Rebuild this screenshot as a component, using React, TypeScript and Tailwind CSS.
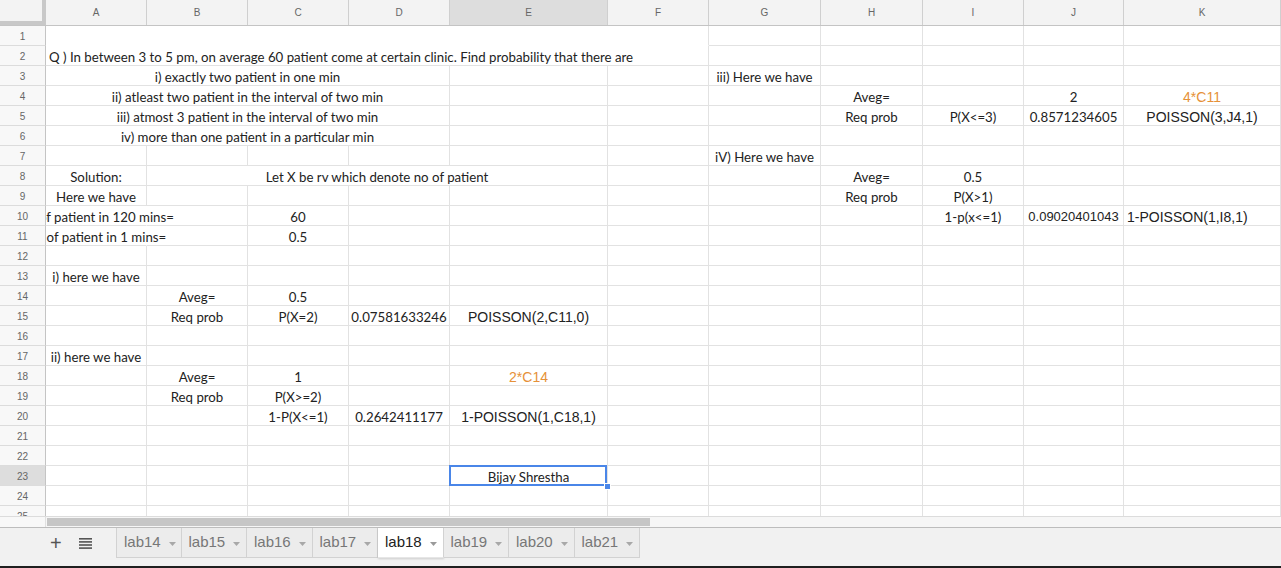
import React from "react";

type Cell = {
  c: number;
  span?: number;
  t?: string;
  align?: "l" | "c";
  f?: "a14" | "a13";
  orange?: boolean;
  noR?: boolean;
  noB?: boolean;
  sel?: boolean;
};

const COLS = ["A", "B", "C", "D", "E", "F", "G", "H", "I", "J", "K"];
const HEAD_W = [
  "w-[101px]",
  "w-[101px]",
  "w-[101px]",
  "w-[101px]",
  "w-[158px]",
  "w-[101px]",
  "w-[112px]",
  "w-[102px]",
  "w-[101px]",
  "w-[100px]",
  "flex-1",
];

const SPAN: Record<number, string> = {
  1: "",
  2: "col-span-2",
  4: "col-span-4",
  6: "col-span-6",
};

const ROWS: Cell[][] = [
  [{ c: 0, span: 6, noB: true }],
  [
    {
      c: 0,
      span: 6,
      align: "l",
      t: "Q ) In between 3 to 5 pm, on average 60 patient come at certain clinic. Find probability that there are",
    },
  ],
  [
    { c: 0, span: 4, t: "i) exactly two patient in one min" },
    { c: 6, t: "iii) Here we have" },
  ],
  [
    { c: 0, span: 4, t: "ii) atleast two patient in the interval of two min" },
    { c: 7, t: "Aveg=" },
    { c: 9, t: "2" },
    { c: 10, t: "4*C11", f: "a14", orange: true },
  ],
  [
    { c: 0, span: 4, t: "iii) atmost 3 patient in the interval of two min" },
    { c: 7, t: "Req prob" },
    { c: 8, t: "P(X<=3)" },
    { c: 9, t: "0.8571234605" },
    { c: 10, t: "POISSON(3,J4,1)", f: "a14" },
  ],
  [{ c: 0, span: 4, t: "iv) more than one patient in a particular min" }],
  [{ c: 6, t: "iV) Here we have" }],
  [
    { c: 0, t: "Solution:" },
    { c: 1, span: 4, t: "Let X be rv which denote no of patient" },
    { c: 7, t: "Aveg=" },
    { c: 8, t: "0.5" },
  ],
  [
    { c: 0, t: "Here we have" },
    { c: 7, t: "Req prob" },
    { c: 8, t: "P(X>1)" },
  ],
  [
    { c: 0, t: "No of patient in 120 mins=", noR: true },
    { c: 2, t: "60" },
    { c: 8, t: "1-p(x<=1)" },
    { c: 9, t: "0.09020401043", f: "a13" },
    { c: 10, t: "1-POISSON(1,I8,1)", f: "a14", align: "l" },
  ],
  [
    { c: 0, t: "No of patient in 1 mins=", noR: true },
    { c: 2, t: "0.5" },
  ],
  [],
  [{ c: 0, t: "i) here we have" }],
  [
    { c: 1, t: "Aveg=" },
    { c: 2, t: "0.5" },
  ],
  [
    { c: 1, t: "Req prob" },
    { c: 2, t: "P(X=2)" },
    { c: 3, t: "0.07581633246" },
    { c: 4, t: "POISSON(2,C11,0)", f: "a14" },
  ],
  [],
  [{ c: 0, t: "ii) here we have" }],
  [
    { c: 1, t: "Aveg=" },
    { c: 2, t: "1" },
    { c: 4, t: "2*C14", f: "a14", orange: true },
  ],
  [
    { c: 1, t: "Req prob" },
    { c: 2, t: "P(X>=2)" },
  ],
  [
    { c: 2, t: "1-P(X<=1)" },
    { c: 3, t: "0.2642411177" },
    { c: 4, t: "1-POISSON(1,C18,1)", f: "a14" },
  ],
  [],
  [],
  [{ c: 4, t: "Bijay Shrestha", sel: true }],
  [],
  [],
];

function fillRow(cells: Cell[]): Cell[] {
  const out: Cell[] = [];
  let i = 0;
  while (i < 11) {
    const found = cells.find((x) => x.c === i);
    if (found) {
      out.push(found);
      i += found.span ?? 1;
    } else {
      out.push({ c: i });
      i += 1;
    }
  }
  return out;
}

function CellView({ cell }: { cell: Cell }) {
  const cls = [
    "relative flex items-end h-full min-w-0 whitespace-nowrap px-[3px] border-b border-r border-[#e2e2e2] leading-[16px]",
    SPAN[cell.span ?? 1],
    cell.align === "l" ? "justify-start" : "justify-center",
    cell.noR ? "border-r-transparent" : "",
    cell.noB ? "border-b-transparent" : "",
    cell.f === "a14"
      ? "font-['Liberation_Sans',Arial,sans-serif] text-[14px]"
      : cell.f === "a13"
      ? "font-['Liberation_Sans',Arial,sans-serif] text-[13px]"
      : "",
    cell.orange ? "text-[#e69138]" : "text-[#222222]",
  ].join(" ");
  return (
    <div className={cls}>
      {cell.t ? <span>{cell.t}</span> : null}
      {cell.sel ? (
        <>
          <div className="absolute -left-px -top-px right-0 -bottom-px border-2 border-[#4a86e8] z-10 pointer-events-none" />
          <div className="absolute -right-[4px] -bottom-[5px] w-[7px] h-[7px] bg-[#4a86e8] border border-white z-20" />
        </>
      ) : null}
    </div>
  );
}

function Row({ n, cells }: { n: number; cells: Cell[] }) {
  const selected = n === 23;
  return (
    <div className="flex h-[20px] shrink-0">
      <div
        className={`relative z-[1] w-[46px] shrink-0 flex items-center justify-center pt-[2px] border-r border-r-[#c4c4c4] border-b border-b-[#dcdcdc] font-['Liberation_Sans',Arial,sans-serif] text-[10px] text-[#666] ${
          selected ? "bg-[#dddddd]" : "bg-[#f8f8f8]"
        }`}
      >
        {n}
      </div>
      <div
        className={`grid flex-1 grid-cols-[101px_101px_101px_101px_158px_101px_112px_102px_101px_100px_157px] ${
          selected ? "" : "overflow-hidden"
        }`}
      >
        {fillRow(cells).map((cell) => (
          <CellView key={cell.c} cell={cell} />
        ))}
      </div>
    </div>
  );
}

function Caret({ dark }: { dark?: boolean }) {
  return (
    <svg width="7" height="4" viewBox="0 0 7 4" className="ml-[8px] mt-[2px]">
      <polygon points="0,0 7,0 3.5,4" fill={dark ? "#9a9a9a" : "#a8a8a8"} />
    </svg>
  );
}

const TABS = ["lab14", "lab15", "lab16", "lab17", "lab18", "lab19", "lab20", "lab21"];

export default function App() {
  return (
    <div className="w-[1281px] h-[568px] overflow-hidden bg-white flex flex-col font-['Lato','Open_Sans',sans-serif] text-[13.25px]">
      {/* Column headers */}
      <div className="flex h-[26px] shrink-0 bg-[#f3f3f3] border-b border-[#c4c4c4]">
        <div className="w-[46px] shrink-0 border-r-[4px] border-b-[4px] border-[#c8c8c8] bg-[#f3f3f3]" />
        {COLS.map((c, i) => (
          <div
            key={c}
            className={`${HEAD_W[i]} shrink-0 flex items-center justify-center border-r border-[#cfcfcf] font-['Liberation_Sans',Arial,sans-serif] text-[10px] text-[#666] ${
              c === "E" ? "bg-[#dddddd]" : ""
            }`}
          >
            {c}
          </div>
        ))}
      </div>

      {/* Body */}
      <div className="h-[490px] shrink-0 overflow-hidden flex flex-col">
        {ROWS.map((cells, i) => (
          <Row key={i} n={i + 1} cells={cells} />
        ))}
        <Row n={25} cells={[]} />
      </div>

      {/* Horizontal scrollbar */}
      <div className="h-[12px] shrink-0 flex border-t border-[#dcdcdc] border-b border-b-[#bdbdbd] bg-[#f6f6f6]">
        <div className="w-[46px] shrink-0 bg-[#f8f8f8] border-r border-[#e0e0e0]" />
        <div className="flex-1 flex items-center pl-[1px]">
          <div className="w-[603px] h-[8px] bg-[#c6c6c6]" />
        </div>
      </div>

      {/* Sheet tabs */}
      <div className="h-[38px] shrink-0 flex items-start bg-[#f1f1f1] font-['Liberation_Sans',Arial,sans-serif]">
        <div className="w-[116px] shrink-0 h-[30px] flex items-center">
          <span className="ml-[50px] text-[20px] leading-none text-[#555] font-light">+</span>
          <svg width="13" height="11" viewBox="0 0 13 11" className="ml-[17px]">
            <rect x="0" y="0" width="13" height="1.6" fill="#555" />
            <rect x="0" y="3.1" width="13" height="1.6" fill="#555" />
            <rect x="0" y="6.2" width="13" height="1.6" fill="#555" />
            <rect x="0" y="9.3" width="13" height="1.6" fill="#555" />
          </svg>
        </div>
        <div className="flex h-[30px]">
          {TABS.map((t) => {
            const active = t === "lab18";
            return (
              <div
                key={t}
                className={`w-[65.5px] h-[30px] flex items-center pl-[7px] border-r border-b border-[#d2d2d2] text-[15px] ${
                  t === "lab14" ? "border-l" : ""
                } ${
                  active
                    ? "bg-white text-[#222] border-b-[#e6e6e6] shadow-[0_1px_2px_rgba(0,0,0,0.15)]"
                    : "bg-[#ececec] text-[#777]"
                }`}
              >
                <span>{t}</span>
                <Caret dark={active} />
              </div>
            );
          })}
        </div>
      </div>

      <div className="h-[2px] shrink-0 bg-[#1f1f1f]" />
    </div>
  );
}
